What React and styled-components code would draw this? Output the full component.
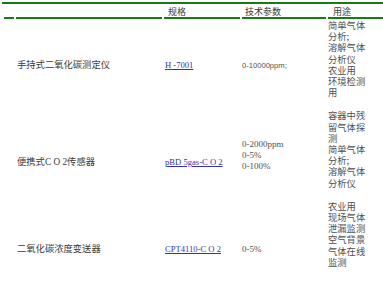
import React from 'react';
import styled, { createGlobalStyle } from 'styled-components';

const Global = createGlobalStyle`
  html, body {
    margin: 0;
    padding: 0;
    background: #ffffff;
    overflow: hidden;
  }
  body {
    font-family: "Noto Sans CJK SC", sans-serif;
    color: #3a3a3a;
  }
`;

const GREEN = '#167a16';

const Table = styled.table`
  margin: 2px 0 0 2px;
  width: 388px;
  table-layout: fixed;
  border-collapse: separate;
  border-spacing: 2px;
  border-top: 2px solid ${GREEN};
`;

const Col = styled.col`
  width: ${(p) => p.$w}px;
`;

const HeadCell = styled.th`
  padding: 0 ${(p) => p.$pad ?? 4}px;
  height: 11px;
  line-height: 11px;
  font-size: 9px;
  font-weight: normal;
  text-align: left;
  color: #3a3a3a;
  white-space: nowrap;
  border-bottom: 2px solid ${GREEN};
  font-family: "Noto Sans CJK SC", sans-serif;
`;

const Cell = styled.td`
  padding: ${(p) => p.$drop || 0}px 0 0 ${(p) => p.$left ?? 0}px;
  vertical-align: middle;
  font-size: 9.3px;
  line-height: 11.2px;
  color: #3a3a3a;
  white-space: nowrap;
  font-family: "Liberation Serif", "Noto Sans CJK SC", serif;
`;

const UseCell = styled.td`
  padding: 0 0 ${(p) => p.$tail || 0}px 0;
  vertical-align: middle;
  font-size: 9.3px;
  line-height: 11.2px;
  color: #505050;
  font-family: "Noto Sans CJK SC", sans-serif;
`;

const UseText = styled.div`
  width: 40px;
  margin-top: -1px;
  word-break: break-all;
`;

const ModelLink = styled.a`
  color: #3232b4;
  text-decoration: underline;
  font-size: 8.6px;
  font-family: "Liberation Serif", serif;
`;

const ParamLine = styled.div`
  font-size: ${(p) => (p.$sans ? '7.6px' : '9px')};
  font-family: ${(p) =>
    p.$sans ? '"Liberation Sans", sans-serif' : '"Liberation Serif", serif'};
  color: #505050;
`;

const products = [
  {
    name: '手持式二氧化碳测定仪',
    model: 'H -7001',
    params: ['0-10000ppm;'],
    sans: true,
    uses: ['简单气体分析;', '溶解气体分析仪', '农业用', '环境检测用'],
    drop: 0,
    paramDrop: 0,
  },
  {
    name: '便携式C O 2传感器',
    model: 'pBD 5gas-C O 2',
    params: ['0-2000ppm', '0-5%', '0-100%'],
    uses: ['容器中残留气体探测', '简单气体分析;', '溶解气体分析仪'],
    drop: 14,
    paramDrop: 0,
  },
  {
    name: '二氧化碳浓度变送器',
    model: 'CPT4110-C O 2',
    params: ['0-5%'],
    uses: ['农业用', '现场气体泄漏监测', '空气背景气体在线监测'],
    drop: 18,
    paramDrop: 18,
  },
];

export default function App() {
  return (
    <>
      <Global />
      <Table>
        <colgroup>
          <Col $w={10} />
          <Col $w={146} />
          <Col $w={76} />
          <Col $w={84} />
          <Col $w={60} />
        </colgroup>
        <thead>
          <tr>
            <HeadCell $pad={0} />
            <HeadCell />
            <HeadCell>规格</HeadCell>
            <HeadCell $pad={3}>技术参数</HeadCell>
            <HeadCell $pad={5}>用途</HeadCell>
          </tr>
        </thead>
        <tbody>
          {products.map((p) => (
            <tr key={p.model}>
              <Cell />
              <Cell $left={1} $drop={p.drop}>
                {p.name}
              </Cell>
              <Cell $left={1} $drop={p.drop}>
                <ModelLink href="#">{p.model}</ModelLink>
              </Cell>
              <Cell $drop={p.paramDrop}>
                {p.params.map((v) => (
                  <ParamLine key={v} $sans={p.sans}>
                    {v}
                  </ParamLine>
                ))}
              </Cell>
              <UseCell $tail={11}>
                <UseText>
                  {p.uses.map((u, i) => (
                    <React.Fragment key={u}>
                      {i > 0 && <br />}
                      {u}
                    </React.Fragment>
                  ))}
                </UseText>
              </UseCell>
            </tr>
          ))}
        </tbody>
      </Table>
    </>
  );
}
